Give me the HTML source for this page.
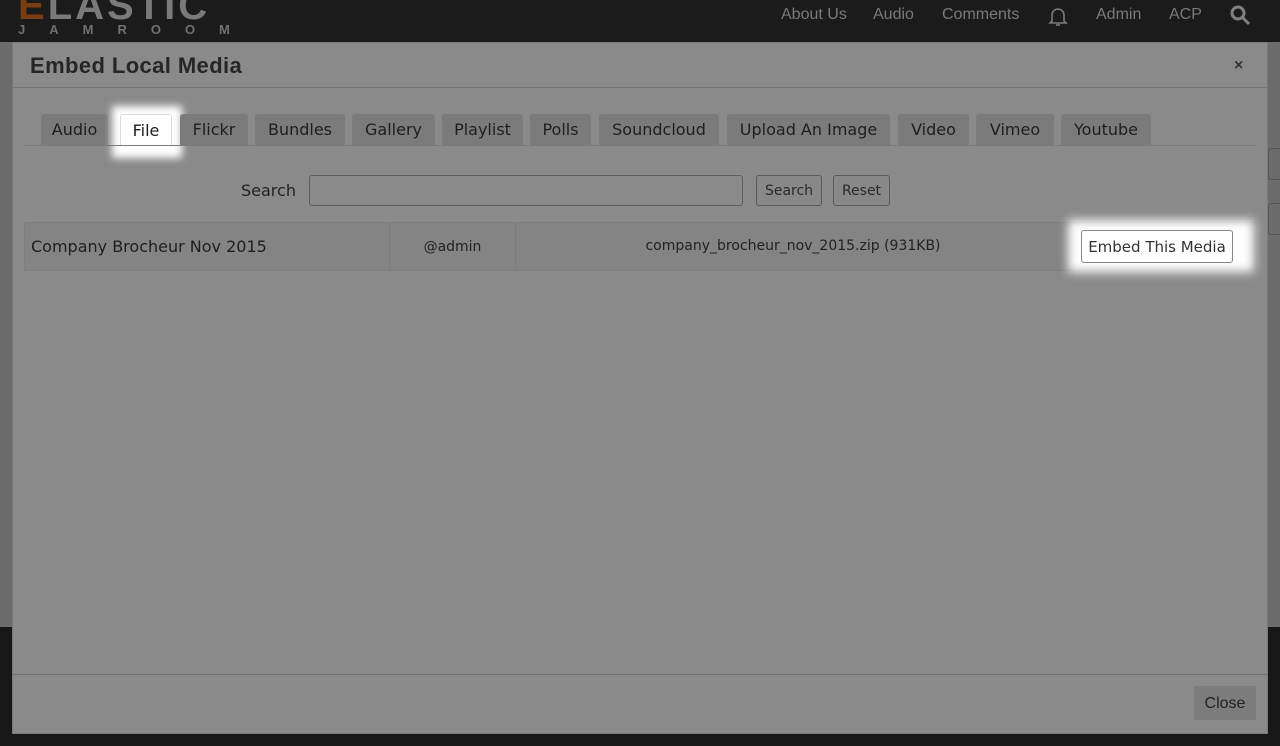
<!DOCTYPE html>
<html><head><style>
*{margin:0;padding:0;box-sizing:border-box}
body{width:1280px;height:746px;overflow:hidden;background:#6c6c6c;position:relative;font-family:"DejaVu Sans",sans-serif}
.abs{position:absolute}
.nav{left:0;top:0;width:1280px;height:42px;background:#1b1b1b}
.nav span{position:absolute;top:6px;font-family:"Liberation Sans",sans-serif;font-size:16px;color:#7a7a7a}
.foot{left:0;top:627px;width:1280px;height:119px;background:#171717}
.modal{left:12px;top:42px;width:1256px;height:692px;background:#8a8a8a;border:1px solid #7a7a7a}
.tab{position:absolute;top:114px;height:32px;background:#7b7b7b;border-radius:3px 3px 0 0;font-size:16px;color:#1e1e1e;text-align:center;line-height:32px}
.btn{position:absolute;border:1px solid #5a5a5a;border-radius:3px;background:#888;font-size:14px;color:#2a2a2a;text-align:center}
</style></head><body>
<div class="abs nav">
<div class="abs" style="left:18px;top:-16px;font:bold 40px 'Liberation Sans',sans-serif;color:#7a7a7a;letter-spacing:3px"><span style="position:static;color:#7a3d12;font-size:40px">E</span>LASTIC</div>
<div class="abs" style="left:18px;top:22px;font:bold 13px 'Liberation Sans',sans-serif;color:#707070;letter-spacing:24px">JAMROOM</div>
<span style="left:781px">About Us</span><span style="left:873px">Audio</span><span style="left:942px">Comments</span>
<svg class="abs" style="left:1047px;top:5px" width="22" height="22" viewBox="0 0 22 22" fill="none" stroke="#7a7a7a" stroke-width="1.6"><path d="M5 16V10a6 6 0 0 1 12 0v6l2 2H3z"/><path d="M9 20h4"/></svg>
<span style="left:1096px">Admin</span><span style="left:1169px">ACP</span>
<svg class="abs" style="left:1229px;top:4px" width="22" height="22" viewBox="0 0 22 22" fill="none" stroke="#808080" stroke-width="3"><circle cx="9" cy="9" r="6"/><path d="M13 13l7 7"/></svg>
</div>
<div class="abs foot"></div>
<div class="abs" style="left:1268px;top:148px;width:12px;height:32px;border:1px solid #555;border-right:none;border-radius:3px 0 0 3px"></div>
<div class="abs" style="left:1268px;top:203px;width:12px;height:32px;border:1px solid #555;border-right:none;border-radius:3px 0 0 3px"></div>
<div class="abs modal"></div>
<div class="abs" style="left:30px;top:53px;font:bold 22px 'Liberation Sans',sans-serif;color:#262626;letter-spacing:0.4px">Embed Local Media</div>
<div class="abs" style="left:1234px;top:57px;font:bold 16px 'Liberation Sans',sans-serif;color:#333">×</div>
<div class="abs" style="left:13px;top:87px;width:1254px;height:1px;background:#757575"></div>
<div class="tab" style="left:41px;width:67px">Audio</div>
<div class="abs" style="left:112px;top:106px;width:70px;height:52px;background:#fff;filter:blur(4px)"></div>
<div class="tab" style="left:120px;width:52px;background:#fff;border:1px solid #ddd;border-bottom:none">File</div>
<div class="tab" style="left:180px;width:68px">Flickr</div>
<div class="tab" style="left:255px;width:90px">Bundles</div>
<div class="tab" style="left:352px;width:83px">Gallery</div>
<div class="tab" style="left:442px;width:81px">Playlist</div>
<div class="tab" style="left:530px;width:61px">Polls</div>
<div class="tab" style="left:599px;width:120px">Soundcloud</div>
<div class="tab" style="left:727px;width:163px">Upload An Image</div>
<div class="tab" style="left:898px;width:71px">Video</div>
<div class="tab" style="left:976px;width:78px">Vimeo</div>
<div class="tab" style="left:1061px;width:90px">Youtube</div>
<div class="abs" style="left:23px;top:145px;width:1234px;height:1px;background:#7a7a7a"></div>
<div class="abs" style="left:241px;top:181px;font-size:16px;color:#222">Search</div>
<div class="abs" style="left:309px;top:175px;width:434px;height:31px;border:1px solid #5e5e5e;border-radius:3px"></div>
<div class="btn" style="left:756px;top:175px;width:66px;height:31px;line-height:30px">Search</div>
<div class="btn" style="left:833px;top:175px;width:57px;height:31px;line-height:30px">Reset</div>
<div class="abs" style="left:24px;top:222px;width:1233px;height:49px;background:#848484;border:1px solid #7e7e7e"></div>
<div class="abs" style="left:389px;top:223px;width:1px;height:47px;background:#7c7c7c"></div>
<div class="abs" style="left:515px;top:223px;width:1px;height:47px;background:#7c7c7c"></div>
<div class="abs" style="left:31px;top:237px;font-size:16px;color:#1e1e1e">Company Brocheur Nov 2015</div>
<div class="abs" style="left:390px;top:239px;width:125px;text-align:center;font-size:14px;color:#222">@admin</div>
<div class="abs" style="left:516px;top:238px;width:554px;text-align:center;font-size:14px;color:#222">company_brocheur_nov_2015.zip (931KB)</div>
<div class="abs" style="left:1068px;top:220px;width:186px;height:52px;background:#fff;filter:blur(5px)"></div>
<div class="abs" style="left:1081px;top:230px;width:152px;height:33px;border:1px solid #888;border-radius:3px;background:#fff;font-size:15px;color:#333;text-align:center;line-height:32px;white-space:nowrap">Embed This Media</div>
<div class="abs" style="left:13px;top:674px;width:1254px;height:1px;background:#6f6f6f"></div>
<div class="abs" style="left:1194px;top:686px;width:62px;height:34px;background:#7c7c7c;font:16px 'Liberation Sans',sans-serif;color:#222;text-align:center;line-height:36px">Close</div>
</body></html>
